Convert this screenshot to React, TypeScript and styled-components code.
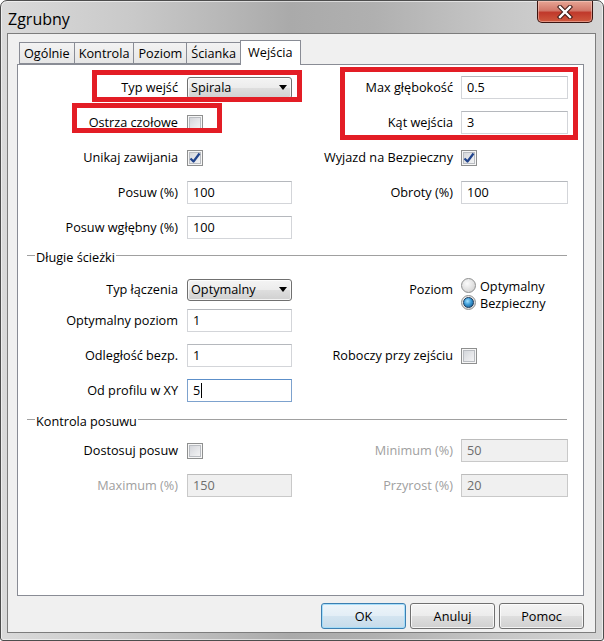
import React from 'react';
import styled, { createGlobalStyle } from 'styled-components';

const GlobalStyle = createGlobalStyle`
  html, body {
    margin: 0;
    padding: 0;
    background: #ffffff;
  }
  body {
    font-family: "Open Sans", "Noto Sans", sans-serif;
    font-size: 12.7px;
    color: #000;
  }
  * {
    box-sizing: border-box;
  }
`;

const Window = styled.div`
  width: 604px;
  height: 641px;
  display: flex;
  flex-direction: column;
  border: 1px solid #4d4d4d;
  border-radius: 7px 7px 3px 3px;
  background: linear-gradient(
    to right,
    #dadada 0%,
    #c9c9c9 22%,
    #aaaaaa 48%,
    #b0b0b0 62%,
    #c6c6c6 82%,
    #d4d4d4 100%
  );
  box-shadow: inset 0 0 0 1px rgba(255, 255, 255, 0.55);
  overflow: hidden;
`;

const TitleBar = styled.div`
  height: 32px;
  flex: none;
  display: flex;
  align-items: flex-start;
  padding-left: 7px;
`;

const Title = styled.span`
  font-size: 16px;
  line-height: 20px;
  padding-top: 8px;
  color: #000;
`;

const CloseButton = styled.div`
  margin-left: auto;
  margin-right: 10px;
  width: 56px;
  height: 22px;
  border: 1px solid #3b1410;
  border-top: none;
  border-radius: 0 0 5px 5px;
  background: linear-gradient(to bottom, #e7a594 0%, #d2786a 45%, #c0392b 55%, #cf5a3f 100%);
  box-shadow: inset 0 0 0 1px rgba(255, 220, 210, 0.45);
  display: flex;
  align-items: center;
  justify-content: center;
`;

const Client = styled.div`
  flex: 1;
  margin: 0 7px 7px 6px;
  border: 1px solid #7d7d7d;
  background: #f0f0f0;
  display: flex;
  flex-direction: column;
  padding-top: 6px;
  padding-bottom: 3px;
`;

const TabStrip = styled.div`
  display: flex;
  align-items: flex-end;
  height: 24px;
  padding-left: 11px;
  flex: none;
`;

const Tab = styled.div<{ $active?: boolean }>`
  height: ${p => (p.$active ? 25 : 22)}px;
  margin-bottom: ${p => (p.$active ? -1 : 0)}px;
  margin-right: -1px;
  padding: 0 ${p => (p.$active ? 7 : 4)}px;
  border: 1px solid #898c95;
  border-bottom: ${p => (p.$active ? 'none' : '1px solid #898c95')};
  background: ${p => (p.$active ? '#ffffff' : 'linear-gradient(to bottom, #f3f3f3, #e6e6e6)')};
  position: relative;
  z-index: ${p => (p.$active ? 2 : 1)};
  display: flex;
  align-items: center;
  padding-bottom: ${p => (p.$active ? 2 : 1)}px;
  white-space: nowrap;
`;

const Pane = styled.div`
  position: relative;
  height: 532px;
  flex: none;
  margin: 0 11px 0 9px;
  border: 1px solid #898c95;
  background: #ffffff;
  padding-top: 5px;
  display: flex;
  flex-direction: column;
`;

const Row = styled.div`
  display: grid;
  grid-template-columns: 169px 105px 169px 107px;
  height: 35px;
  align-items: center;
`;

const Label = styled.span<{ $right?: boolean; $disabled?: boolean }>`
  text-align: right;
  padding-right: ${p => (p.$right ? 8 : 9)}px;
  padding-bottom: 2px;
  color: ${p => (p.$disabled ? '#a0a0a0' : '#000')};
  white-space: nowrap;
`;

const SectionHeader = styled.div<{ $height: number }>`
  height: ${p => p.$height}px;
  display: flex;
  align-items: center;
  padding: 0 16px 0 9px;

  &::before,
  &::after {
    content: '';
    height: 1px;
    background: #a0a0a0;
    margin-top: -3px;
  }
  &::before {
    width: 8px;
  }
  &::after {
    flex: 1;
  }
  span {
    padding: 0 1px;
  }
`;

const TextBox = styled.div<{ $focused?: boolean; $disabled?: boolean }>`
  height: 23px;
  width: 100%;
  border: 1px solid ${p => (p.$focused ? '#7da2ce' : p.$disabled ? '#c9c9c9' : '#d3d5d9')};
  border-top-color: ${p => (p.$focused ? '#5c8fc9' : p.$disabled ? '#bcbcbc' : '#b5b8bd')};
  background: ${p => (p.$disabled ? '#f0f0f0' : '#ffffff')};
  color: ${p => (p.$disabled ? '#6d6d6d' : '#000')};
  display: flex;
  align-items: center;
  padding: 0 5px 1px;
`;

const Caret = styled.span`
  display: inline-block;
  width: 1px;
  height: 15px;
  background: #000;
  margin-left: 1px;
`;

const Combo = styled.div`
  height: 22px;
  width: 100%;
  border: 1px solid #707070;
  border-radius: 3px;
  background: linear-gradient(to bottom, #f4f4f4 0%, #ececec 48%, #dedede 52%, #d0d0d0 100%);
  box-shadow: inset 0 0 0 1px rgba(255, 255, 255, 0.75);
  display: flex;
  align-items: center;
  justify-content: space-between;
  padding: 0 4px 1px 3px;
`;

const ComboArrow = styled.span`
  width: 0;
  height: 0;
  border-left: 4px solid transparent;
  border-right: 4px solid transparent;
  border-top: 5px solid #000;
`;

const CheckBox = styled.span`
  width: 16px;
  height: 16px;
  border: 1px solid #8e8f8f;
  background: linear-gradient(135deg, #cdd0d5 0%, #e4e5e8 50%, #f8f8f8 100%);
  box-shadow: inset 0 0 0 1px #f6f6f6, inset 0 0 0 2px #b9bcc1;
  display: flex;
  align-items: center;
  justify-content: center;
`;

const RadioGroup = styled.div`
  align-self: start;
  padding-top: 9px;
  display: flex;
  flex-direction: column;
`;

const RadioOption = styled.div`
  height: 17px;
  display: flex;
  align-items: center;
  gap: 4px;
  white-space: nowrap;
`;

const RadioDot = styled.span<{ $on?: boolean }>`
  width: 15px;
  height: 15px;
  flex: none;
  border-radius: 50%;
  border: 1px solid #8e8f8f;
  background: radial-gradient(circle at 40% 35%, #fbfbfb 0%, #dedede 60%, #c8c8c8 100%);
  display: flex;
  align-items: center;
  justify-content: center;

  &::after {
    content: '';
    display: ${p => (p.$on ? 'block' : 'none')};
    width: 9px;
    height: 9px;
    border-radius: 50%;
    border: 1px solid #163a5f;
    background: radial-gradient(circle at 40% 35%, #a6e3ff 0%, #3b9ad6 45%, #0f4f80 100%);
  }
`;

const Highlight = styled.div<{ $x: number; $y: number; $w: number; $h: number }>`
  position: absolute;
  left: ${p => p.$x}px;
  top: ${p => p.$y}px;
  width: ${p => p.$w}px;
  height: ${p => p.$h}px;
  border: 5px solid #e31d25;
  pointer-events: none;
`;

const ButtonRow = styled.div`
  display: flex;
  justify-content: flex-end;
  gap: 4px;
  margin-top: 7px;
  padding-right: 11px;
  flex: none;
`;

const DialogButton = styled.div<{ $primary?: boolean }>`
  width: 85px;
  height: 26px;
  border: 1px solid ${p => (p.$primary ? '#3c7fb1' : '#707070')};
  border-radius: 3px;
  background: ${p =>
    p.$primary
      ? 'linear-gradient(to bottom, #eef5fa 0%, #e3eef6 48%, #d3e4f0 52%, #c6dbea 100%)'
      : 'linear-gradient(to bottom, #f4f4f4 0%, #ececec 48%, #dedede 52%, #d0d0d0 100%)'};
  box-shadow: inset 0 0 0 1px ${p => (p.$primary ? 'rgba(160, 220, 250, 0.9)' : 'rgba(255, 255, 255, 0.75)')};
  display: flex;
  align-items: center;
  justify-content: center;
  padding-bottom: 1px;
`;

const CheckMark = () => (
  <svg width="12" height="12" viewBox="0 0 12 12">
    <path d="M1.5 6.5 L4.5 9.5 L10.5 1.5" fill="none" stroke="#21448c" strokeWidth="2.2" strokeLinejoin="round" />
  </svg>
);

const CloseGlyph = () => (
  <svg width="16" height="14" viewBox="0 0 16 14">
    <path d="M3 2 L13 12 M13 2 L3 12" stroke="#3a1612" strokeWidth="4.4" strokeLinecap="square" />
    <path d="M3 2 L13 12 M13 2 L3 12" stroke="#ffffff" strokeWidth="2.4" strokeLinecap="square" />
  </svg>
);

const tabs = ['Ogólnie', 'Kontrola', 'Poziom', 'Ścianka', 'Wejścia'];

export default function App() {
  return (
    <>
      <GlobalStyle />
      <Window>
        <TitleBar>
          <Title>Zgrubny</Title>
          <CloseButton>
            <CloseGlyph />
          </CloseButton>
        </TitleBar>
        <Client>
          <TabStrip>
            {tabs.map(t => (
              <Tab key={t} $active={t === 'Wejścia'}>
                {t}
              </Tab>
            ))}
          </TabStrip>
          <Pane>
            <Row>
              <Label>Typ wejść</Label>
              <Combo>
                Spirala
                <ComboArrow />
              </Combo>
              <Label $right>Max głębokość</Label>
              <TextBox>0.5</TextBox>
            </Row>
            <Row>
              <Label>Ostrza czołowe</Label>
              <CheckBox />
              <Label $right>Kąt wejścia</Label>
              <TextBox>3</TextBox>
            </Row>
            <Row>
              <Label>Unikaj zawijania</Label>
              <CheckBox>
                <CheckMark />
              </CheckBox>
              <Label $right>Wyjazd na Bezpieczny</Label>
              <CheckBox>
                <CheckMark />
              </CheckBox>
            </Row>
            <Row>
              <Label>Posuw (%)</Label>
              <TextBox>100</TextBox>
              <Label $right>Obroty (%)</Label>
              <TextBox>100</TextBox>
            </Row>
            <Row>
              <Label>Posuw wgłębny (%)</Label>
              <TextBox>100</TextBox>
            </Row>

            <SectionHeader $height={23}>
              <span>Długie ścieżki</span>
            </SectionHeader>
            <Row>
              <Label>Typ łączenia</Label>
              <Combo>
                Optymalny
                <ComboArrow />
              </Combo>
              <Label $right>Poziom</Label>
              <RadioGroup>
                <RadioOption>
                  <RadioDot />
                  Optymalny
                </RadioOption>
                <RadioOption>
                  <RadioDot $on />
                  Bezpieczny
                </RadioOption>
              </RadioGroup>
            </Row>
            <Row>
              <Label>Optymalny poziom</Label>
              <TextBox>1</TextBox>
            </Row>
            <Row>
              <Label>Odległość bezp.</Label>
              <TextBox>1</TextBox>
              <Label $right>Roboczy przy zejściu</Label>
              <CheckBox />
            </Row>
            <Row>
              <Label>Od profilu w XY</Label>
              <TextBox $focused>
                5<Caret />
              </TextBox>
            </Row>

            <SectionHeader $height={25}>
              <span>Kontrola posuwu</span>
            </SectionHeader>
            <Row>
              <Label>Dostosuj posuw</Label>
              <CheckBox />
              <Label $right $disabled>
                Minimum (%)
              </Label>
              <TextBox $disabled>50</TextBox>
            </Row>
            <Row>
              <Label $disabled>Maximum (%)</Label>
              <TextBox $disabled>150</TextBox>
              <Label $right $disabled>
                Przyrost (%)
              </Label>
              <TextBox $disabled>20</TextBox>
            </Row>

            <Highlight $x={74} $y={5} $w={210} $h={32} />
            <Highlight $x={54} $y={38} $w={150} $h={30} />
            <Highlight $x={322} $y={2} $w={238} $h={73} />
          </Pane>
          <ButtonRow>
            <DialogButton $primary>OK</DialogButton>
            <DialogButton>Anuluj</DialogButton>
            <DialogButton>Pomoc</DialogButton>
          </ButtonRow>
        </Client>
      </Window>
    </>
  );
}
